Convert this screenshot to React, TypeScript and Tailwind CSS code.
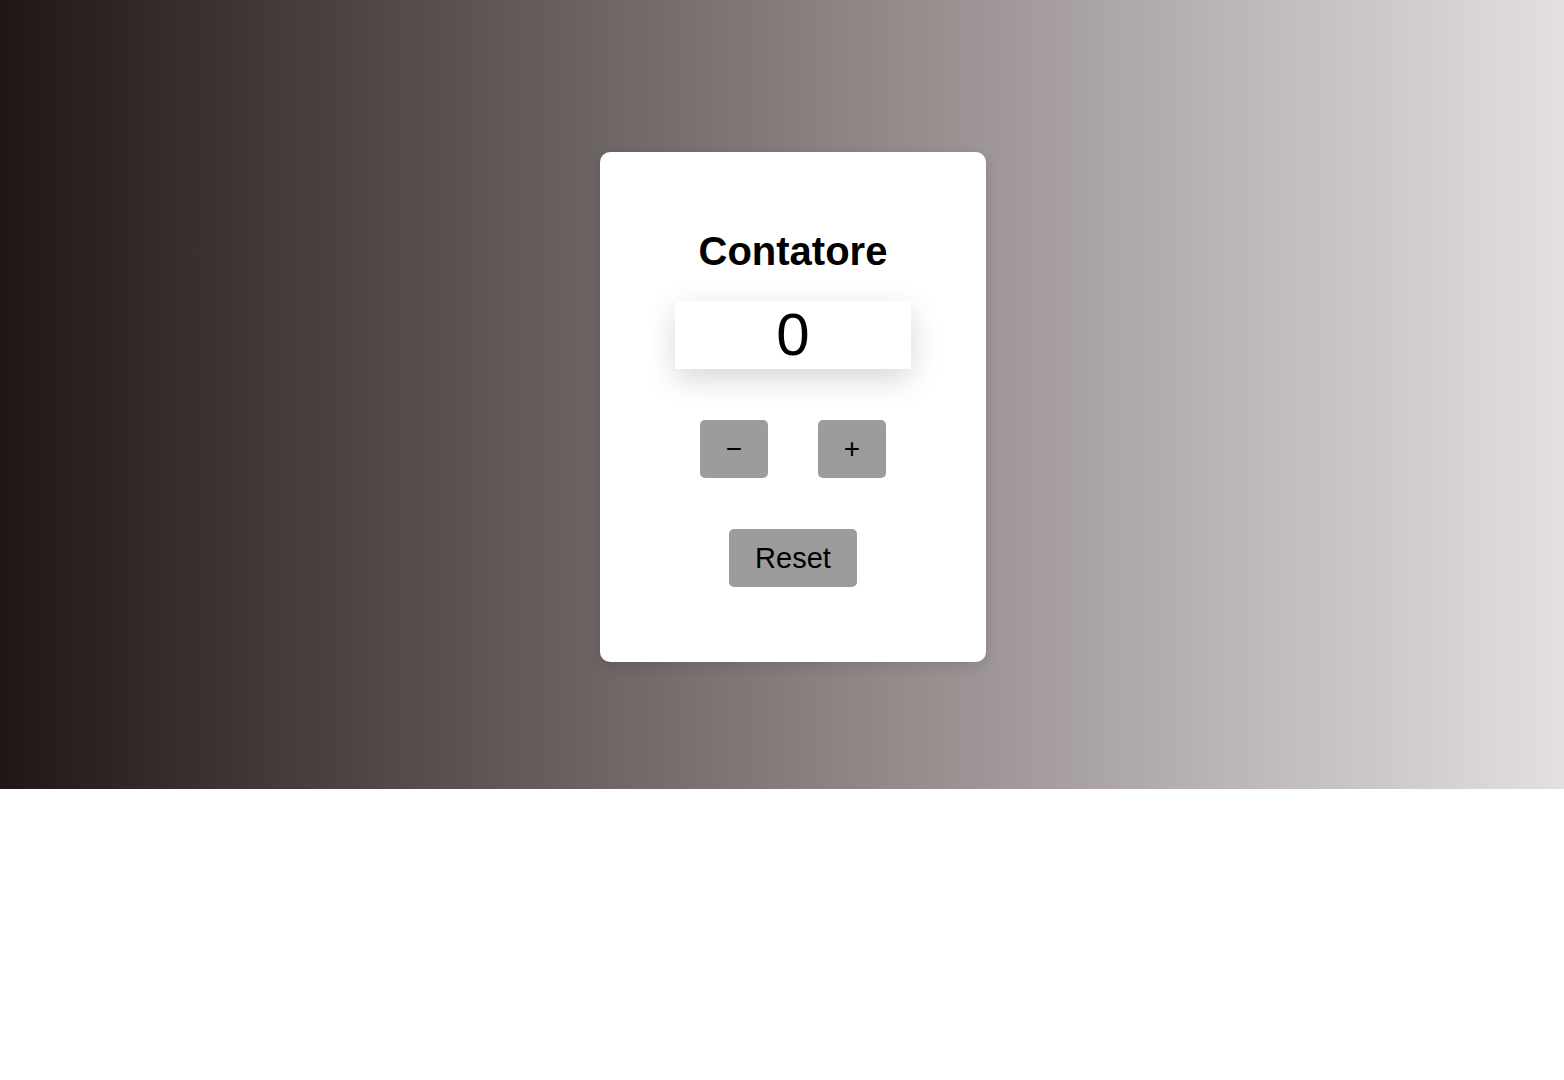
export default function App() {
    return (
        <div className="min-h-[1080px] bg-white font-['Liberation_Sans',Arial,sans-serif] text-black">
            <section className="flex h-[789px] justify-center bg-[linear-gradient(to_right,#1f1716_0%,#8f8686_55%,#e4e0e0_100%)] pl-[22px] pt-[152px]">
                <div className="flex h-[510px] w-[386px] flex-col items-center rounded-[10px] bg-white pt-[76px] shadow-[0_4px_14px_rgba(0,0,0,0.12)]">
                    <h1 className="text-[40px] font-bold leading-[46px]">Contatore</h1>

                    {/* Counter display */}
                    <div className="mt-[27px] flex h-[68px] w-[236px] items-center justify-center bg-white text-[60px] leading-[68px] shadow-[0_10px_30px_rgba(0,0,0,0.16)]">
                        0
                    </div>

                    <div className="mt-[51px] flex gap-[50px]">
                        <button type="button" className="h-[58px] w-[68px] rounded-[5px] bg-[#9b9c9b] text-[28px] leading-none">
                            −
                        </button>
                        <button type="button" className="h-[58px] w-[68px] rounded-[5px] bg-[#9b9c9b] text-[28px] leading-none">
                            +
                        </button>
                    </div>

                    <button type="button" className="mt-[51px] h-[58px] w-[128px] rounded-[5px] bg-[#9b9c9b] text-[29px] leading-none">
                        Reset
                    </button>
                </div>
            </section>
        </div>
    )
}
